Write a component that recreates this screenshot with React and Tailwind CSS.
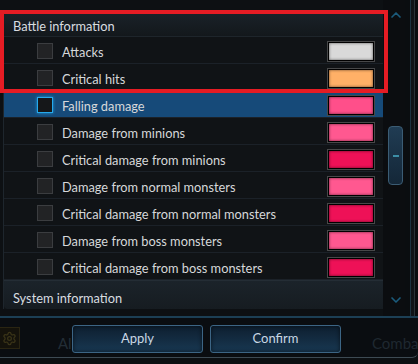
import { ChevronUp, ChevronDown, Settings } from 'lucide-react'

const rows = [
  { label: 'Attacks', color: '#d9d9d9' },
  { label: 'Critical hits', color: '#ffb067' },
  { label: 'Falling damage', color: '#ff4f8a', active: true },
  { label: 'Damage from minions', color: '#ff5890' },
  { label: 'Critical damage from minions', color: '#ee1157' },
  { label: 'Damage from normal monsters', color: '#ff5890' },
  { label: 'Critical damage from normal monsters', color: '#ee1157' },
  { label: 'Damage from boss monsters', color: '#ff5890' },
  { label: 'Critical damage from boss monsters', color: '#ee1157' },
]

function Row({ label, color, active }) {
  return (
    <div
      className={
        active
          ? 'flex items-center h-[27px] border-b border-[#1b2128] bg-[#164a79]'
          : 'flex items-center h-[27px] border-b border-[#1b2128]'
      }
    >
      <div
        className={
          active
            ? 'ml-[33px] translate-y-[1px] w-[16px] h-[16px] bg-[#151719] border border-[#27a9ec] shadow-[0_0_3px_#1b9be0]'
            : 'ml-[33px] translate-y-[1px] w-[16px] h-[16px] bg-[#222325] border border-[#3b3d40]'
        }
      />
      <span className="ml-[9px] translate-y-[3px] text-[12.8px] text-[#d6d8da] flex-1">{label}</span>
      <div className="mr-[8px] translate-y-[1px] w-[48px] h-[21px] border border-[#474849] bg-black p-[1px]">
        <div
          className="w-full h-full shadow-[inset_0_0_3px_rgba(0,0,0,0.6)]"
          style={{ backgroundColor: color }}
        />
      </div>
    </div>
  )
}

export default function App() {
  return (
    <div
      className="relative w-[418px] h-[364px] overflow-hidden bg-[#0c0f12] flex flex-col"
      style={{ fontFamily: 'Lato, "Open Sans", sans-serif' }}
    >
      {/* panel */}
      <div className="flex h-[318px] border-b-2 border-[#1c3f55]">
        <div className="w-[383px] pt-[10px] pl-[3px] bg-[#0d1013]">
          <div className="border-l border-[#1e262d] bg-[#101316]">
            <div className="flex items-center h-[27px] pl-[9px] border-b border-[#1e252b] bg-gradient-to-b from-[#1b232a] to-[#13181c]">
              <span className="translate-y-[4px] text-[12.8px] text-[#d9dde0]">Battle information</span>
            </div>
            {rows.map((r) => (
              <Row key={r.label} {...r} />
            ))}
            <div className="flex items-center h-[29px] pl-[9px] rounded-bl-sm border-t border-[#242d35] bg-gradient-to-b from-[#1b232a] to-[#161c21]">
              <span className="translate-y-[4px] text-[12.8px] text-[#d9dde0]">System information</span>
            </div>
          </div>
        </div>
        {/* scroll column */}
        <div className="w-[22px] bg-[#0b0d10] flex flex-col items-center pl-[3px] pt-[7px] pb-[8px]">
          <ChevronUp size={16} strokeWidth={2.5} className="text-[#1b5b7c]" />
          <div className="mt-[103px] w-[15px] h-[59px] rounded-[4px] border border-[#3b5c74] bg-gradient-to-b from-[#203c53] to-[#142738] flex items-center justify-center">
            <div className="w-[6px] h-[2px] bg-[#3c8ea6]" />
          </div>
          <div className="flex-1" />
          <ChevronDown size={16} strokeWidth={2.5} className="text-[#1b5b7c]" />
        </div>
        {/* right frame */}
        <div className="w-[13px] flex bg-[#0a0d10]">
          <div className="w-[5px]" />
          <div className="w-[1px] bg-[#1d3442]" />
          <div className="w-[3px] bg-[#101418]" />
          <div className="w-[1px] bg-[#2a3238]" />
        </div>
      </div>

      {/* footer */}
      <div className="relative flex-1 flex items-start pt-[7px] bg-[#0a0d11] border-b border-[#3d4a53] rounded-br-md mb-[6px]">
        <div className="w-[22px] h-[22px] ml-[-2px] mt-[2px] border border-[#2a2512] bg-[#14120b] flex items-center justify-center">
          <Settings size={15} className="text-[#3a3418]" />
        </div>
        <span className="absolute left-[58px] top-[14px] text-[15px] text-[#232d36]">Al</span>
        <span className="absolute left-[372px] top-[14px] text-[15px] text-[#1f2830]">Comba</span>
        <div className="relative ml-[52px] flex gap-[7px]">
          <button className="w-[131px] h-[28px] rounded-[3px] border border-[#3c6585] bg-gradient-to-b from-[#0e1f30] to-[#183852] text-[13px] text-[#c9d7e4] shadow-[inset_0_0_4px_rgba(0,0,0,0.6)]">
            Apply
          </button>
          <button className="w-[131px] h-[28px] rounded-[3px] border border-[#3c6585] bg-gradient-to-b from-[#0e1f30] to-[#183852] text-[13px] text-[#c9d7e4] shadow-[inset_0_0_4px_rgba(0,0,0,0.6)]">
            Confirm
          </button>
        </div>
      </div>

      {/* red highlight annotation */}
      <div className="absolute left-0 top-[10px] w-[388px] h-[83px] border-4 border-[#e61c24] pointer-events-none" />
    </div>
  )
}
